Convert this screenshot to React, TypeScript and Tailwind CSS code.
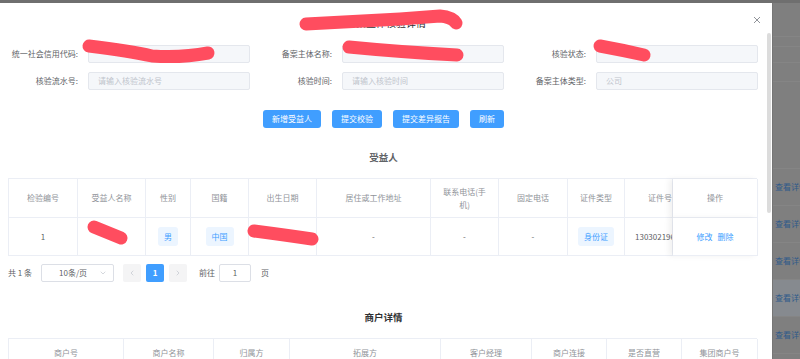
import { ChevronDown, ChevronLeft, ChevronRight } from "lucide-react";

const formRows = [
  [
    { label: "统一社会信用代码:", value: "" },
    { label: "备案主体名称:", value: "" },
    { label: "核验状态:", value: "" },
  ],
  [
    { label: "核验流水号:", value: "请输入核验流水号" },
    { label: "核验时间:", value: "请输入核验时间" },
    { label: "备案主体类型:", value: "公司" },
  ],
];

const buttons = ["新增受益人", "提交校验", "提交差异报告", "刷新"];

const merchantCols = ["商户号", "商户名称", "归属方", "拓展方", "客户经理", "商户连接", "是否直营", "集团商户号"];

function Tag({ children }: { children: React.ReactNode }) {
  return (
    <span className="inline-flex items-center h-[19px] px-[6px] rounded-[3px] bg-[#ecf5ff] text-[#409eff] text-[8px]">
      {children}
    </span>
  );
}

function Cell({ children, className = "" }: { children?: React.ReactNode; className?: string }) {
  return (
    <div className={"flex items-center justify-center border-r border-b border-[#ebeef5] text-center " + className}>
      {children}
    </div>
  );
}

function Scribbles() {
  // red marker strokes drawn over the screenshot
  return (
    <svg className="absolute inset-0 pointer-events-none" width="800" height="359" viewBox="0 0 800 359">
      <g fill="none" stroke="#ff4d5f" strokeWidth="13" strokeLinecap="round" strokeLinejoin="round">
        <path d="M306 24 L400 19 L440 16 Q452 17 456 23" />
        <path d="M89 46 Q130 51 152 56 Q182 58 208 53" />
        <path d="M349 47 Q400 52 457 55" />
        <path d="M600 46 Q622 50 644 55" />
        <path d="M94 227 L121 238" />
        <path d="M254 231 Q285 235 312 239" />
      </g>
    </svg>
  );
}

export default function App() {
  return (
    <div className="relative w-[800px] h-[359px] overflow-hidden bg-[#6f6f6f] pt-[3px] font-['Noto_Sans_CJK_SC','Noto_Sans',sans-serif]">
      <div className="flex h-[356px]">
        {/* dialog */}
        <div className="w-[772px] bg-white flex flex-col overflow-hidden">
          <div className="h-[30px] shrink-0 grid grid-cols-[1fr_auto_1fr] items-center">
            <div />
            <div className="text-[10px] leading-[14px] text-[#303133] pt-[10px]">备案主体核验详情</div>
            <div className="flex justify-end pr-[11px] pt-[4px]">
              <svg width="8" height="8" viewBox="0 0 8 8">
                <path d="M1 1 L7 7 M7 1 L1 7" stroke="#909399" strokeWidth="1" />
              </svg>
            </div>
          </div>

          <div className="flex flex-1 min-h-0">
            <div className="w-[767px] flex flex-col pt-[12px]">
              {/* search form */}
              <div className="flex flex-col gap-[9px] shrink-0">
                {formRows.map((row, i) => (
                  <div key={i} className="flex gap-[4px]">
                    {row.map((f) => (
                      <div key={f.label} className="flex items-center w-[250px]">
                        <div className="w-[88px] pr-[10px] text-right text-[8px] text-[#606266] whitespace-nowrap">{f.label}</div>
                        <div className="w-[162px] h-[18px] flex items-center px-[9px] bg-[#f5f7fa] border border-[#e4e7ed] rounded-[2px] text-[8px] text-[#c0c4cc]">
                          {f.value}
                        </div>
                      </div>
                    ))}
                  </div>
                ))}
              </div>

              <div className="flex justify-center gap-[11px] mt-[20px] shrink-0">
                {buttons.map((b) => (
                  <div key={b} className="h-[18px] px-[9px] flex items-center rounded-[3px] bg-[#409eff] text-white text-[8px]">
                    {b}
                  </div>
                ))}
              </div>

              <div className="mt-[22px] h-[14px] shrink-0 leading-[14px] text-center text-[9.5px] font-bold text-[#606266]">受益人</div>

              {/* beneficiary table */}
              <div className="ml-[8px] w-[749px] mt-[14px] shrink-0 border-l border-t border-[#ebeef5] grid grid-cols-[69px_68px_45px_58px_68px_114px_68px_69px_57px_48px_85px] text-[8px]">
                {["检验编号", "受益人名称", "性别", "国籍", "出生日期", "居住或工作地址"].map((h) => (
                  <Cell key={h} className="h-[39px] text-[#909399]">{h}</Cell>
                ))}
                <Cell className="h-[39px] text-[#909399] leading-[13px]">
                  联系电话(手<br />机)
                </Cell>
                <Cell className="h-[39px] text-[#909399]">固定电话</Cell>
                <Cell className="h-[39px] text-[#909399]">证件类型</Cell>
                <Cell className="h-[39px] text-[#909399] !justify-start overflow-hidden whitespace-nowrap pl-[23px]">证件号</Cell>
                <Cell className="h-[39px] text-[#909399] bg-white shadow-[-4px_0_6px_rgba(0,0,0,0.06)]">操作</Cell>

                <Cell className="h-[38px] text-[#606266]">1</Cell>
                <Cell className="h-[38px] text-[#606266]">-</Cell>
                <Cell className="h-[38px]"><Tag>男</Tag></Cell>
                <Cell className="h-[38px]"><Tag>中国</Tag></Cell>
                <Cell className="h-[38px] text-[#606266]">-</Cell>
                <Cell className="h-[38px] text-[#606266]">-</Cell>
                <Cell className="h-[38px] text-[#606266]">-</Cell>
                <Cell className="h-[38px] text-[#606266]">-</Cell>
                <Cell className="h-[38px]"><Tag>身份证</Tag></Cell>
                <Cell className="h-[38px] text-[#606266] !justify-start overflow-hidden whitespace-nowrap pl-[10px]">130302196805</Cell>
                <Cell className="h-[38px] bg-white gap-[5px] text-[#409eff] shadow-[-4px_0_6px_rgba(0,0,0,0.06)]">
                  <span>修改</span>
                  <span>删除</span>
                </Cell>
              </div>

              {/* pagination */}
              <div className="flex items-center h-[18px] shrink-0 mt-[8px] ml-[8px] text-[8px] text-[#606266]">
                <span>共 1 条</span>
                <div className="ml-[9px] w-[73px] h-[18px] border border-[#dcdfe6] rounded-[2px] flex items-center justify-between pl-[17px] pr-[6px]">
                  <span>10条/页</span>
                  <ChevronDown size={8} color="#c0c4cc" />
                </div>
                <div className="ml-[9px] w-[18px] h-[18px] rounded-[2px] bg-[#f4f4f5] flex items-center justify-center">
                  <ChevronLeft size={8} color="#c0c4cc" />
                </div>
                <div className="ml-[5px] w-[18px] h-[18px] rounded-[2px] bg-[#409eff] text-white font-bold flex items-center justify-center">1</div>
                <div className="ml-[5px] w-[18px] h-[18px] rounded-[2px] bg-[#f4f4f5] flex items-center justify-center">
                  <ChevronRight size={8} color="#c0c4cc" />
                </div>
                <span className="ml-[12px]">前往</span>
                <div className="ml-[4px] w-[32px] h-[18px] border border-[#dcdfe6] rounded-[2px] flex items-center justify-center">1</div>
                <span className="ml-[10px]">页</span>
              </div>

              <div className="mt-[28px] h-[14px] shrink-0 leading-[14px] text-center text-[9.5px] font-bold text-[#303133]">商户详情</div>

              <div className="ml-[8px] w-[749px] mt-[14px] shrink-0 border-l border-t border-[#ebeef5] grid grid-cols-[115px_90px_76px_151px_91px_75px_75px_76px] text-[8px]">
                {merchantCols.map((h) => (
                  <Cell key={h} className="h-[29px] text-[#909399]">{h}</Cell>
                ))}
              </div>
            </div>

            {/* scrollbar */}
            <div className="w-[5px] pr-[1px]">
              <div className="h-[180px] w-[4px] rounded-[2px] bg-[#dcdcdc]" />
            </div>
          </div>
        </div>

        {/* page behind the overlay */}
        <div className="flex-1 flex flex-col bg-[#7f7f7f] border-l border-[#767676] text-[8px] text-[#2f5a8a] whitespace-nowrap overflow-hidden">
          <div className="h-[34px] shrink-0 border-b border-[#858585]" />
          <div className="h-[10px] shrink-0 border-b border-[#858585]" />
          <div className="h-[16px] shrink-0 border-b border-[#858585]" />
          <div className="h-[19px] shrink-0 border-b border-[#858585]" />
          <div className="h-[87px] shrink-0 border-b border-[#858585]" />
          {[0, 1, 2, 3, 4].map((i) => (
            <div
              key={i}
              className={"h-[37px] shrink-0 flex items-center pl-[2px] border-b border-[#858585] " + (i === 3 ? "bg-[#868a8f]" : "")}
            >
              查看详情
            </div>
          ))}
        </div>
      </div>
      <Scribbles />
    </div>
  );
}
